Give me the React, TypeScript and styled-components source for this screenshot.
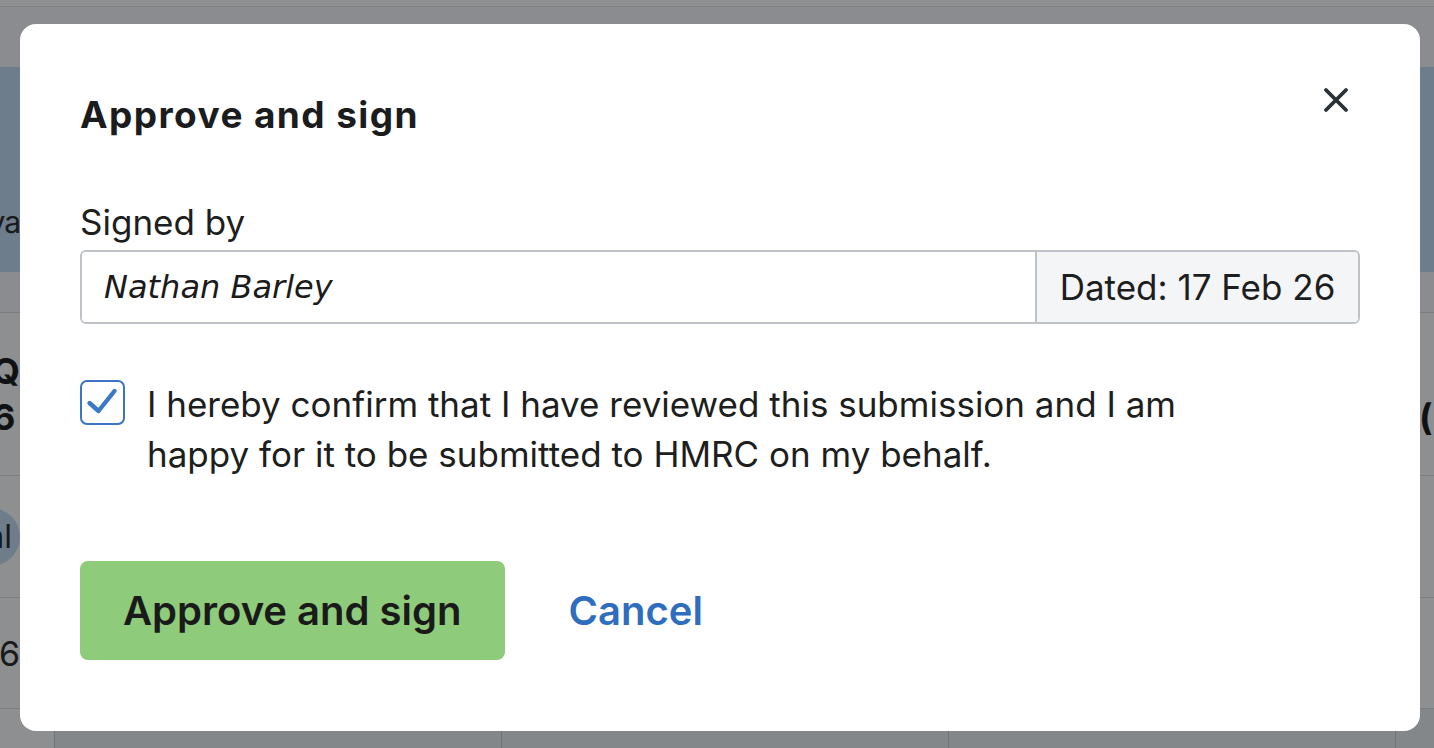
import React from 'react'
import styled, {createGlobalStyle} from 'styled-components'

const GlobalStyle = createGlobalStyle`
  html, body {
    margin: 0;
    padding: 0;
    height: 100%;
    overflow: hidden;
    background: #f7f8f9;
    font-family: Inter, "Noto Sans", sans-serif;
    color: #1d1e20;
  }
`

function Backdrop() {
  return (
    <Page>
      <TopBar />
      <HeaderStrip />
      <Banner>
        <GutterText>va</GutterText>
      </Banner>
      <TableHead />
      <Row $height={163}>
        <Gutter>
          <GutterStrong>
            Q
            <br />6
          </GutterStrong>
        </Gutter>
        <RightGutter>
          <GutterStrong>(0</GutterStrong>
        </RightGutter>
      </Row>
      <Row $height={122}>
        <Gutter>
          <Pill>al</Pill>
        </Gutter>
      </Row>
      <Row $height={111}>
        <Gutter>
          <GutterPlain>26</GutterPlain>
        </Gutter>
      </Row>
      <LastRow>
        <LastSide />
        <LastCell />
        <LastCell />
        <LastCell />
        <LastFill />
      </LastRow>
    </Page>
  )
}

function CheckIcon() {
  return (
    <svg width="41" height="41" viewBox="0 0 41 41" fill="none">
      <path
        d="M7.5 21 L16.5 29 L32.5 9"
        stroke="#3a78c8"
        strokeWidth="4.4"
        strokeLinecap="round"
        strokeLinejoin="round"
      />
    </svg>
  )
}

function CloseIcon() {
  return (
    <svg width="26" height="26" viewBox="0 0 26 26" fill="none">
      <path
        d="M3 3 L23 23 M23 3 L3 23"
        stroke="#283136"
        strokeWidth="3.8"
        strokeLinecap="round"
      />
    </svg>
  )
}

function ApproveDialog() {
  return (
    <Overlay>
      <Dialog role="dialog" aria-labelledby="approve-title">
        <DialogHeader>
          <Title id="approve-title">Approve and sign</Title>
          <CloseButton aria-label="Close">
            <CloseIcon />
          </CloseButton>
        </DialogHeader>

        <Label htmlFor="signed-by">Signed by</Label>
        <InputGroup>
          <SignatureInput id="signed-by" defaultValue="Nathan Barley" />
          <Addon>Dated: 17 Feb 26</Addon>
        </InputGroup>

        <ConfirmRow>
          <CheckBox role="checkbox" aria-checked="true">
            <CheckIcon />
          </CheckBox>
          <ConfirmText>
            I hereby confirm that I have reviewed this submission and I am
            <br />
            happy for it to be submitted to HMRC on my behalf.
          </ConfirmText>
        </ConfirmRow>

        <Actions>
          <PrimaryButton>Approve and sign</PrimaryButton>
          <LinkButton>Cancel</LinkButton>
        </Actions>
      </Dialog>
    </Overlay>
  )
}

export default function App() {
  return (
    <>
      <GlobalStyle />
      <Backdrop />
      <ApproveDialog />
    </>
  )
}

/* ---------- page behind the overlay ---------- */

const Page = styled.div`
  height: 748px;
  display: flex;
  flex-direction: column;
  background: #ffffff;
`

const TopBar = styled.div`
  height: 6px;
  background: #ffffff;
  border-bottom: 1px solid #e4e6e8;
`

const HeaderStrip = styled.div`
  height: 60px;
  background: #f9fafc;
`

const Banner = styled.div`
  height: 205px;
  background: #c2def5;
  display: flex;
  align-items: flex-end;
  padding-bottom: 32px;
  box-sizing: border-box;
`

const TableHead = styled.div`
  height: 40px;
  background: #f9fafb;
  border-bottom: 1px solid #dcdfe2;
`

const Row = styled.div<{$height: number}>`
  height: ${p => p.$height}px;
  box-sizing: border-box;
  border-bottom: 1px solid #dcdfe2;
  display: flex;
  align-items: center;
  justify-content: space-between;
  background: #ffffff;
`

const Gutter = styled.div`
  width: 20px;
  overflow: hidden;
  display: flex;
  justify-content: flex-end;
`

const RightGutter = styled.div`
  width: 14px;
  overflow: hidden;
  padding-top: 50px;
  margin-right: 1px;
`

const GutterText = styled.div`
  width: 20px;
  overflow: hidden;
  font-size: 30px;
  letter-spacing: -1px;
  text-align: right;
  white-space: nowrap;
  color: #222;
  direction: rtl;
`

const GutterStrong = styled.div`
  font-size: 36px;
  font-weight: 700;
  line-height: 46px;
  white-space: nowrap;
  color: #111;
`

const GutterPlain = styled.div`
  font-size: 34px;
  white-space: nowrap;
  color: #222;
`

const Pill = styled.div`
  flex-shrink: 0;
  height: 58px;
  padding: 0 8px 0 30px;
  border-radius: 29px;
  background: #c6def2;
  display: flex;
  align-items: center;
  font-size: 32px;
  color: #222;
`

const LastRow = styled.div`
  flex: 1;
  display: flex;
`

const LastSide = styled.div`
  width: 54px;
  background: #ffffff;
  border-right: 1px solid #c9cdd1;
`

const LastCell = styled.div`
  width: 446px;
  background: #eef0f2;
  border-right: 1px solid #c9cdd1;
`

const LastFill = styled.div`
  flex: 1;
  background: #eef0f2;
`

/* ---------- dialog ---------- */

const Overlay = styled.div`
  position: fixed;
  inset: 0;
  background: rgba(12, 18, 22, 0.47);
  display: flex;
  align-items: flex-start;
  justify-content: flex-start;
  padding: 24px 0 0 20px;
`

const Dialog = styled.div`
  width: 1400px;
  height: 707px;
  box-sizing: border-box;
  background: #ffffff;
  border-radius: 16px;
  padding: 70px 60px 70px;
  display: flex;
  flex-direction: column;
`

const DialogHeader = styled.div`
  display: flex;
  align-items: center;
  justify-content: space-between;
  height: 42px;
`

const Title = styled.h2`
  margin: 0;
  font-size: 37px;
  font-weight: 700;
  letter-spacing: 1.4px;
  line-height: 42px;
  color: #1b1c1e;
`

const CloseButton = styled.button`
  width: 48px;
  height: 48px;
  margin-top: -30px;
  border: 0;
  background: none;
  padding: 0;
  display: flex;
  align-items: center;
  justify-content: center;
  cursor: pointer;
`

const Label = styled.label`
  margin-top: 66px;
  font-size: 35px;
  line-height: 40px;
  color: #1d1e20;
`

const InputGroup = styled.div`
  margin-top: 8px;
  display: flex;
  height: 74px;
  box-sizing: border-box;
  border: 2px solid #bfc3c8;
  border-radius: 6px;
  overflow: hidden;
`

const SignatureInput = styled.input`
  flex: 1;
  min-width: 0;
  border: 0;
  outline: none;
  padding: 0 22px;
  font-family: "DejaVu Sans", sans-serif;
  font-style: italic;
  font-size: 32px;
  color: #1b1b1b;
  background: #ffffff;
`

const Addon = styled.div`
  width: 323px;
  box-sizing: border-box;
  border-left: 2px solid #bfc3c8;
  background: #f4f5f7;
  display: flex;
  align-items: center;
  justify-content: center;
  font-size: 35px;
  color: #1d1e20;
`

const ConfirmRow = styled.div`
  margin-top: 56px;
  display: flex;
  align-items: flex-start;
  gap: 22px;
`

const CheckBox = styled.div`
  flex-shrink: 0;
  width: 45px;
  height: 45px;
  box-sizing: border-box;
  border: 2px solid #3a74c2;
  border-radius: 7px;
  display: flex;
  align-items: center;
  justify-content: center;
`

const ConfirmText = styled.p`
  margin: -1px 0 0;
  font-size: 35px;
  line-height: 50px;
  color: #1d1e20;
`

const Actions = styled.div`
  margin-top: 82px;
  display: flex;
  align-items: center;
  gap: 40px;
`

const PrimaryButton = styled.button`
  height: 99px;
  padding: 0 43px;
  border: 0;
  border-radius: 8px;
  background: #8ecb7b;
  font-family: inherit;
  font-size: 40px;
  font-weight: 600;
  color: #1a1a1a;
  cursor: pointer;
`

const LinkButton = styled.button`
  border: 0;
  background: none;
  padding: 0 24px;
  font-family: inherit;
  font-size: 40px;
  font-weight: 600;
  color: #2f6dbf;
  cursor: pointer;
`
